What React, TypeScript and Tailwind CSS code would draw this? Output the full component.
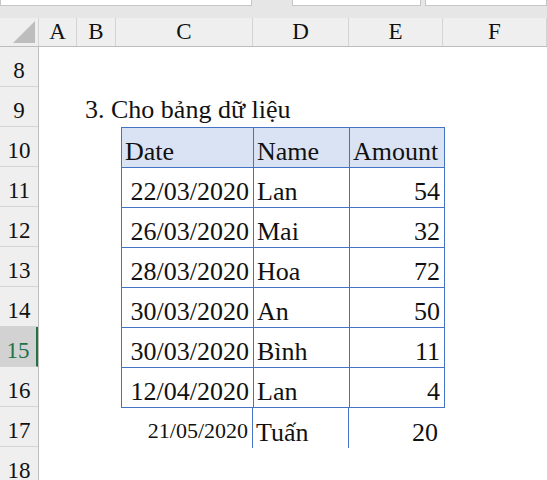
import React from 'react'

const cols = [
  { name: 'A', w: 38 },
  { name: 'B', w: 39 },
  { name: 'C', w: 137 },
  { name: 'D', w: 96 },
  { name: 'E', w: 94 },
  { name: 'F', w: 104 },
]

const data = [
  ['22/03/2020', 'Lan', '54'],
  ['26/03/2020', 'Mai', '32'],
  ['28/03/2020', 'Hoa', '72'],
  ['30/03/2020', 'An', '50'],
  ['30/03/2020', 'Bình', '11'],
  ['12/04/2020', 'Lan', '4'],
]

export default function App() {
  const rows = [8, 9, 10, 11, 12, 13, 14, 15, 16, 17, 18]
  return (
    <div className="w-[547px] h-[480px] overflow-hidden bg-white text-[22px] text-[#111]" style={{ fontFamily: '"Liberation Serif", serif' }}>
      {/* toolbar strip */}
      <div className="h-[18px] bg-[#e6e6e6] flex items-start gap-[4px]">
        <div className="w-[252px] h-[6px] bg-white border border-[#c6c6c6] border-t-0" />
        <div className="w-[32px]" />
        <div className="w-[129px] h-[6px] bg-white border border-[#c6c6c6] border-t-0" />
        <div className="flex-1 h-[6px] bg-white border border-[#c6c6c6] border-t-0" />
      </div>
      {/* column headers */}
      <div className="flex h-[29px] bg-[#efefef] border-b border-[#bdbdbd] text-[23px]">
        <div className="w-[39px] shrink-0 border-r border-[#d4d4d4] flex items-end justify-end p-[3px]">
          <div className="w-0 h-0 border-l-[22px] border-l-transparent border-b-[22px] border-b-[#bdbdbd]" />
        </div>
        {cols.map(c => (
          <div key={c.name} style={{ width: c.w }} className="shrink-0 border-r border-[#d4d4d4] flex items-center justify-center">
            {c.name}
          </div>
        ))}
      </div>
      <div className="flex">
        {/* row headers */}
        <div className="w-[39px] shrink-0 bg-[#efefef] border-r border-[#bdbdbd] text-[23px]">
          {rows.map(r => (
            <div key={r} className={`h-[40px] border-b border-[#d4d4d4] flex items-center justify-center pt-[8px] leading-none ${r === 15 ? 'bg-[#d2d2d2] text-[#217346] border-r-2 border-r-[#217346]' : ''}`}>
              {r}
            </div>
          ))}
        </div>
        <div className="flex-1 text-[26px] leading-[30px]">
          <div className="h-[40px]" />
          <div className="h-[40px] flex items-end pl-[46px] pb-[2px]">3. Cho bảng dữ liệu</div>
          <div className="ml-[82px] w-[324px] border border-[#4472c4] border-b-0">
            <div className="flex h-[40px] bg-[#dae3f3] border-b border-[#4472c4]">
              <div className="w-[132px] border-r border-[#4472c4] flex items-end pl-[3px]">Date</div>
              <div className="w-[96px] border-r border-[#4472c4] flex items-end pl-[3px]">Name</div>
              <div className="flex-1 flex items-end pl-[3px]">Amount</div>
            </div>
            {data.map((d, i) => (
              <div key={i} className="flex h-[40px] border-b border-[#4472c4]">
                <div className="w-[132px] border-r border-[#4472c4] flex items-end justify-end pr-[4px]">{d[0]}</div>
                <div className="w-[96px] border-r border-[#4472c4] flex items-end pl-[3px]">{d[1]}</div>
                <div className="flex-1 flex items-end justify-end pr-[4px]">{d[2]}</div>
              </div>
            ))}
          </div>
          <div className="ml-[82px] w-[324px] flex h-[40px]">
            <div className="w-[132px] border-r border-[#4472c4] flex items-end justify-end pr-[4px] pb-[2px] text-[22px]">21/05/2020</div>
            <div className="w-[96px] border-r border-[#4472c4] flex items-end pl-[3px]">Tuấn</div>
            <div className="w-[93px] flex items-end justify-end pr-[4px]">20</div>
          </div>
        </div>
      </div>
    </div>
  )
}
